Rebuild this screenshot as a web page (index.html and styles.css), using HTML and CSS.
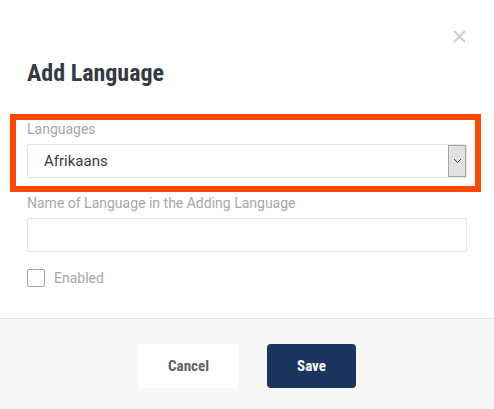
FILE: index.html
```html
<!DOCTYPE html>
<html lang="en">
<head>
<meta charset="utf-8">
<title>Add Language</title>
<link rel="stylesheet" href="styles.css">
</head>
<body>
<div class="modal">
  <div class="modal-body">
    <div class="close-row">
      <button class="close" aria-label="Close">
        <svg width="13" height="13" viewBox="0 0 13 13"><path d="M1 1 L12 12 M12 1 L1 12" stroke="#c9cdd1" stroke-width="1.8" fill="none"/></svg>
      </button>
    </div>
    <h2 class="title">Add Language</h2>
    <div class="highlight">
      <label class="label">Languages</label>
      <div class="select">
        <span class="select-text">Afrikaans</span>
        <span class="select-btn">
          <svg width="9" height="6" viewBox="0 0 9 6"><path d="M1 1 L4.5 4.5 L8 1" stroke="#444" stroke-width="1" fill="none"/></svg>
        </span>
      </div>
    </div>
    <div class="field">
      <label class="label">Name of Language in the Adding Language</label>
      <div class="input"></div>
    </div>
    <div class="check-row">
      <span class="checkbox"></span>
      <span class="check-label">Enabled</span>
    </div>
  </div>
  <div class="modal-footer">
    <button class="btn btn-cancel">Cancel</button>
    <button class="btn btn-save">Save</button>
  </div>
</div>
</body>
</html>
```

FILE: styles.css
```css
* { box-sizing: border-box; }
html, body { margin: 0; padding: 0; background: #fff; }
body { font-family: Roboto, "Liberation Sans", sans-serif; width: 494px; height: 409px; overflow: hidden; }
.modal { display: flex; flex-direction: column; height: 409px; }
.modal-body { padding: 0 27px; height: 319px; border-bottom: 1px solid #e6e6e6; flex: none; }
.close-row { display: flex; justify-content: flex-end; padding-top: 30px; padding-right: 1px; height: 43px; }
.close { border: 0; background: none; padding: 0; width: 13px; height: 13px; display: block; }
.close svg { display: block; }
.title { margin: 15px 0 0 0; font-family: "Roboto Condensed", "Liberation Sans Narrow", Roboto, sans-serif; font-stretch: condensed; font-weight: 700; font-size: 24px; line-height: 30px; color: #353a40; }
.highlight { margin: 26px -14px 0 -17px; border: 6px solid #ff4800; padding: 1px 8px 0 11px; height: 78px; }
.label { display: block; font-size: 14px; line-height: 16px; color: #a3a8ae; }
.select { margin-top: 7px; height: 34px; border: 1px solid #e6e6e6; border-radius: 2px; display: flex; align-items: stretch; justify-content: space-between; }
.select-text { padding-left: 16px; font-size: 15px; line-height: 32px; color: #3a3a3a; }
.select-btn { width: 18px; background: #e1e1e1; border: 1px solid #a3a3a3; display: flex; align-items: center; justify-content: center; }
.field { margin-top: 3px; }
.field .input { margin-top: 7px; height: 34px; border: 1px solid #e6e6e6; border-radius: 2px; }
.check-row { display: flex; align-items: center; margin-top: 17px; }
.checkbox { width: 18px; height: 18px; border: 1px solid #a0a6ad; border-radius: 2px; flex: none; }
.check-label { margin-left: 9px; font-size: 14px; line-height: 18px; color: #a3a8ae; }
.modal-footer { flex: 1; background: #f7f7f7; display: flex; justify-content: center; align-items: flex-start; padding-top: 25px; gap: 28px; }
.btn { height: 44px; border: 0; border-radius: 4px; font-family: "Roboto Condensed", "Liberation Sans Narrow", Roboto, sans-serif; font-stretch: condensed; font-weight: 700; font-size: 15px; cursor: pointer; padding: 0; }
.btn-cancel { width: 101px; background: #fff; color: #5e6166; }
.btn-save { width: 89px; background: #1b355e; color: #fff; }
```
